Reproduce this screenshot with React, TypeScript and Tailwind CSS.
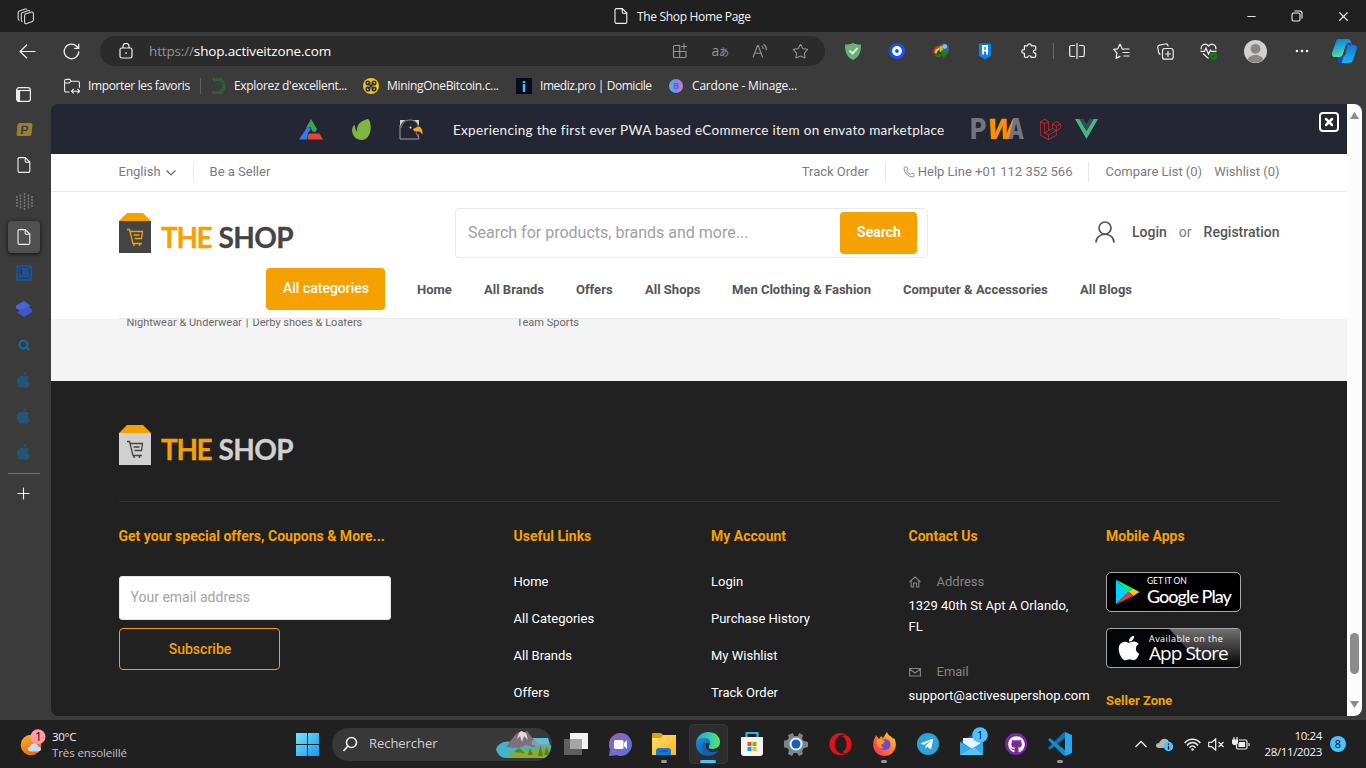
import React from 'react';
import { Star, ChevronDown, Phone, Plus, X, Minus, Search } from 'lucide-react';
import { FaApple, FaGithub, FaLaravel, FaOpera, FaTelegramPlane } from 'react-icons/fa';

const DocIcon = ({ className = '' }: { className?: string }) => (
  <svg width="14" height="16" viewBox="0 0 14 16" fill="none" stroke="#f2f2f2" strokeWidth="1.1" className={className}>
    <path d="M2.5.6h5.8L12.8 5v8.9c0 .9-.6 1.5-1.5 1.5H2.5c-.9 0-1.5-.6-1.5-1.5V2.1C1 1.2 1.6.6 2.5.6ZM8.2.8v3.1c0 .8.5 1.3 1.3 1.3h3.1" />
  </svg>
);

const Cell = ({ children, className = 'w-11' }: { children: React.ReactNode; className?: string }) => (
  <div className={`flex shrink-0 items-center justify-center ${className}`}>{children}</div>
);

function TitleBar() {
  return (
    <div className="flex h-8 items-center bg-[#202020] text-[#f5f5f5]">
      <Cell className="ml-1 w-11">
        <svg width="18" height="17" viewBox="0 0 18 17" fill="none" stroke="#d6d6d6" strokeWidth="1.1" strokeLinejoin="round">
          <path d="M7.5 6.3 14 4.2c1.5-.4 2.4.1 2.4 1.5v6.1c0 .8-.4 1.3-1.1 1.6l-5.4 2.2c-1.4.5-2.3 0-2.3-1.4V7.9c0-.8.4-1.3 1-1.5" />
          <path d="M5.5 13.7c-.8-.1-1.2-.6-1.2-1.4V6.2c0-.8.4-1.3 1.2-1.6L11 2.7c1-.3 1.7-.2 2.1.5M2.5 12.3c-.9-.1-1.3-.6-1.3-1.5V4.6c0-.8.4-1.3 1.2-1.6L8 1.1c1-.3 1.7-.2 2.1.5" />
        </svg>
      </Cell>
      <div className="ml-[566px] flex items-center">
        <DocIcon />
        <span className="ml-[9px] w-[118px] whitespace-nowrap pt-px font-['Open_Sans'] text-[12px] tracking-[-0.33px]">The Shop Home Page</span>
      </div>
      <div className="ml-auto flex">
        <Cell className="w-[46px]"><Minus size={13} strokeWidth={1.7} /></Cell>
        <Cell className="w-[46px]">
          <svg width="12" height="12" viewBox="0 0 12 12" fill="none" stroke="#eee" strokeWidth="1.1"><rect x="1" y="3" width="8" height="8" rx="1.5" /><path d="M3.5 1h5C10 1 11 2 11 3.5v5" /></svg>
        </Cell>
        <Cell className="w-[46px]"><X size={15} strokeWidth={1.9} /></Cell>
      </div>
    </div>
  );
}

function AddressBar() {
  return (
    <div className="ml-1.5 flex h-[30px] w-[725px] items-center rounded-full bg-[#2b2b2b]">
      <svg className="ml-[19px]" width="14" height="16" viewBox="0 0 14 16" fill="none" stroke="#eee" strokeWidth="1.2">
        <rect x="1" y="5" width="12" height="10" rx="1.8" /><path d="M4 5V3.3a3 3 0 0 1 6 0V5" /><rect x="6.3" y="9.3" width="1.5" height="1.5" fill="#eee" stroke="none" />
      </svg>
      <span className="ml-4 whitespace-nowrap font-['Open_Sans'] text-[13.5px] tracking-[-0.15px] text-white"><span className="text-[#949494]">https://</span>shop.activeitzone.com</span>
      <div className="ml-auto mr-[5px] flex text-[#959595]">
        <Cell className="w-10">
          <svg width="16" height="16" viewBox="0 0 16 16" fill="none" stroke="#959595" strokeWidth="1.1"><path d="M8 2.500H2.500c-.6 0-1 .4-1 1v10c0 .6.400 1 1 1h10.500c.6 0 1-.4 1-1V8.500H1.500M7.700 2.500v12M12 .5v6M9 3.500h6" /></svg>
        </Cell>
        <Cell className="w-10"><span className="whitespace-nowrap font-['Open_Sans'] text-[14px] leading-4 tracking-[-0.5px]">a<span className="font-['Noto_Sans_CJK_JP'] text-[10px]">あ</span></span></Cell>
        <Cell className="w-10">
          <svg width="16" height="16" viewBox="0 0 16 16" fill="none" stroke="#959595" strokeWidth="1.1"><path d="m1 14.5 4.5-12h.7l4.5 12M2.700 10.300h6.400M9.800 3c1 .8 1.400 1.800 1.400 3M11.500 1.300c2.200 1.300 3 3.300 2.800 6" /></svg>
        </Cell>
        <Cell className="w-10"><Star size={17} strokeWidth={1.5} /></Cell>
      </div>
    </div>
  );
}

function Toolbar() {
  return (
    <div className="flex h-[38px] items-center bg-[#3b3b3b]">
      <Cell className="ml-[5px] w-11">
        <svg width="17" height="15" viewBox="0 0 17 15" fill="none" stroke="#eee" strokeWidth="1.2"><path d="M16.500 7.500H1M8 .7 1 7.500l7 6.800" /></svg>
      </Cell>
      <Cell className="w-[45px]">
        <svg width="17" height="17" viewBox="0 0 17 17" fill="none" stroke="#eee" strokeWidth="1.3"><path d="M15.800 8.500a7.300 7.300 0 1 1-2.100-5.200L15.500 5M15.700.8v4.500h-4.500" /></svg>
      </Cell>
      <AddressBar />
      <div className="ml-1.5 flex items-center">
        <Cell>
          <svg width="16" height="17" viewBox="0 0 16 17"><path d="M8 0c2.500 1 5 1.500 8 1.600C16 9 14.500 14 8 17 1.500 14 0 9 0 1.600 3 1.500 5.500 1 8 0Z" fill="#67b279" /><path d="m4.500 7.500 3 3 5-5.500" stroke="#fff" strokeWidth="1.600" fill="none" /></svg>
        </Cell>
        <Cell><svg width="16" height="16" viewBox="0 0 16 16"><circle cx="8" cy="8" r="8" fill="#1652f0" /><circle cx="8" cy="8" r="3.400" stroke="#fff" strokeWidth="3" fill="none" /></svg></Cell>
        <Cell>
          <svg width="17" height="16" viewBox="0 0 17 16" fill="none">
            <path d="M7.500 3.500C3 4 1.200 6.500 1.200 10" stroke="#e5392b" strokeWidth="1.800" /><path d="M7.500 5.500C4 6 2.800 8 2.800 10.500" stroke="#f4d21f" strokeWidth="1.800" />
            <circle cx="11" cy="5.500" r="5" fill="#3b62a8" /><circle cx="11.800" cy="3.500" r="2.300" fill="#9cbadf" /><path d="M6 5c2-3 4-3 4 0S8 9 7 9Z" fill="#b5c32c" />
            <path d="M1 10c1 4.500 5 5.500 9 2.500V15.500L16.500 9 8 7.500l1 2.500c-2 2-5 2-8 0Z" fill="#1f7a10" />
          </svg>
        </Cell>
        <Cell>
          <svg width="12" height="17" viewBox="0 0 12 17"><path d="M0 .5h12v12.300L6 16.500 0 12.800Z" fill="#0d83e8" /><path d="M3 2h6v9.500H7.200V8.500H4.800v3H3Z" fill="#fff" /><path d="M4.900 4h.8v3h-.8ZM6.300 4h.8v3h-.8Z" fill="#0d83e8" /></svg>
        </Cell>
        <Cell>
          <svg width="16" height="16" viewBox="0 0 16 16" fill="none" stroke="#eee" strokeWidth="1.200" strokeLinejoin="round"><path d="M3.500 2.800h3c0-2.600 3.800-2.600 3.800 0h3.200c.7 0 1.200.5 1.200 1.200v3c-3.100-.4-3.100 3.600 0 3.200v3c0 .7-.5 1.200-1.200 1.200h-3.200c-.2-2.200-3.400-2.200-3.700 0h-2c-.7 0-1.200-.5-1.200-1.200v-2.900c-3.500 0-3.500-3.700 0-3.700Z" /></svg>
        </Cell>
      </div>
      <div className="ml-0.5 h-4 w-px bg-[#686868]" />
      <div className="ml-px flex items-center">
        <Cell>
          <svg width="16" height="16" viewBox="0 0 16 16" fill="none" stroke="#eee" strokeWidth="1.200"><path d="M6 2.500H2.300c-.9 0-1.600.7-1.600 1.600v7.800c0 .9.7 1.600 1.600 1.600H6M10 2.500h3.700c.9 0 1.600.7 1.600 1.600v7.800c0 .9-.7 1.600-1.600 1.600H10M8 0v16" /></svg>
        </Cell>
        <Cell>
          <svg width="17" height="17" viewBox="0 0 17 17" fill="none" stroke="#eee" strokeWidth="1.200" strokeLinejoin="round"><path d="m10.800 6.300-1.500-.2L7 1 4.800 5.800.7 6.300l3.200 3.600-.8 5.500 4.200-2.300M10.500 6h6M9.500 9.500h7M10.500 13h6" /></svg>
        </Cell>
        <Cell>
          <svg width="17" height="17" viewBox="0 0 17 17" fill="none" stroke="#eee" strokeWidth="1.200"><rect x="5.500" y="5.500" width="10.700" height="10.700" rx="2.300" /><path d="M11 8v6M8 11h6M3.500 11.500C2.300 11.300 2 10.700 1.700 9.500L.8 5C.5 3.600 1 2.600 2.400 2.200L8 1c1.600-.4 2.600.1 3 1.600l.2.800" /></svg>
        </Cell>
        <Cell>
          <svg width="18" height="17" viewBox="0 0 18 17" fill="none" stroke="#eee" strokeWidth="1.200"><path d="M1.300 6.300C.3 2.500 5-1 8.500 3c3.600-4 8.300-.5 7.200 3.300M.5 8.300h4L6 5l2.500 6 2-4 1 1.300h5M3 10.500l5.500 5" /><circle cx="13.500" cy="13" r="3.700" fill="#107c10" stroke="none" /><path d="m12 13 1 1 2-2.200" stroke="#0b4a0b" strokeWidth="1" /></svg>
        </Cell>
        <Cell className="w-12">
          <svg width="23" height="23" viewBox="0 0 23 23"><circle cx="11.500" cy="11.500" r="11.500" fill="#d2d0ce" /><circle cx="11.500" cy="8.800" r="4.900" fill="#8a8886" /><path d="M3.700 19.500c2-6 13.600-6 15.600 0-4.500 4.300-11 4.300-15.600 0Z" fill="#8b8987" /></svg>
        </Cell>
        <Cell className="w-[45px]"><svg width="14" height="4" fill="#f2f2f2"><circle cx="2" cy="2" r="1.300" /><circle cx="7" cy="2" r="1.300" /><circle cx="12" cy="2" r="1.300" /></svg></Cell>
        <Cell className="w-10">
          <svg width="25" height="24" viewBox="0 0 25 24">
            <defs><linearGradient id="cpa" x2=".3" y2="1"><stop stopColor="#0877c9" /><stop offset=".5" stopColor="#20acd8" /><stop offset="1" stopColor="#57dc9d" /></linearGradient><linearGradient id="cpb" x2="0" y2="1"><stop stopColor="#1d70d6" /><stop offset="1" stopColor="#16b6f5" /></linearGradient></defs>
            <path d="M6 0h10c2 0 2.500 1.500 3 3l1 3h-6l-3 9c-.6 2-1.700 3-3.500 3H3c-3 0-3.500-2-2.700-4.500L4 2.500C4.500 1 5 0 6 0Z" fill="url(#cpa)" />
            <path d="M16 6h6c2.500 0 3.300 2 2.600 4.500L21 21c-.6 2-1.700 3-3.500 3H9c-2 0-3-2-3-5.500h3.500c1.300 0 2-.7 2.500-2l2.300-8c.4-1.600.7-2.500 1.700-2.500Z" fill="url(#cpb)" />
            <path d="M14 6h6l-1-2.500h-4Z" fill="#1a50b8" /><path d="m11 16 3-9.500 1.500-.5-2.500 10.500Z" fill="#3b3b3b" />
            <path d="M6 18.500h3.500c1.300 0 2-.7 2.500-2L9.500 24C7 24 6 21.500 6 18.500Z" fill="#1745c9" />
          </svg>
        </Cell>
      </div>
    </div>
  );
}

function Bookmarks() {
  const text = "whitespace-nowrap font-['Open_Sans'] text-[12px] text-[#f4f4f4]";
  return (
    <div className="flex h-[34px] items-center pb-0.5 pl-[13px]">
      <svg width="16" height="16" viewBox="0 0 16 16" fill="none" stroke="#eee" strokeWidth="1.100"><path d="M5.500 14H2.200C1.200 14 .6 13.400.6 12.400V3C.6 2 1.200 1.400 2.200 1.400h3.500l1.500 1.800h6.600c1 0 1.600.6 1.600 1.600v5M.6 5h4.600l2-1.800M8 13.200h7.500M9.700 11l-2.200 2.200 2.200 2.200M13.500 11l2.200 2.200-2.200 2.200" /></svg>
      <span className={`${text} ml-2 w-[112px] tracking-[-0.37px]`}>Importer les favoris</span>
      <div className="h-4 w-px bg-[#606060]" />
      <svg className="ml-[9px]" width="16" height="16" viewBox="0 0 16 16" fill="none"><path d="M3 2.500C8-.5 14 2.500 14 8s-6 9-12 5.500" stroke="#2b6439" strokeWidth="3.500" strokeDasharray="2.500 .5" /></svg>
      <span className={`${text} ml-2 w-[129px] tracking-[-0.32px]`}>Explorez d'excellent...</span>
      <svg width="16" height="16" viewBox="0 0 16 16"><circle cx="8" cy="8" r="8" fill="#f2c414" /><g fill="none" stroke="#28304f" strokeWidth="1.500"><circle cx="5" cy="5" r="1.800" /><circle cx="11" cy="5" r="1.800" /><circle cx="5" cy="11" r="1.800" /><circle cx="11" cy="11" r="1.800" /><path d="m5 5 6 6M11 5l-6 6" /></g></svg>
      <span className={`${text} ml-2 w-[129px] tracking-[-0.32px]`}>MiningOneBitcoin.c...</span>
      <div className="flex size-4 items-center justify-center bg-[#050b1b] font-['Open_Sans'] text-[15px] font-bold leading-4 text-[#50c4e8]">i</div>
      <span className={`${text} ml-2 w-[129px] tracking-[-0.46px]`}>Imediz.pro | Domicile</span>
      <div className="flex size-3.5 items-center justify-center rounded-full bg-linear-to-r from-[#37bde8] via-[#7a86eb] to-[#dc6fd1] text-[9px] font-bold text-[#5966c5]">B</div>
      <span className={`${text} ml-[9px] tracking-[-0.18px]`}>Cardone - Minage...</span>
    </div>
  );
}

const dotColumns = [
  { x: 1, ys: [4, 7, 10, 13] },
  { x: 4.5, ys: [2.5, 5.5, 8.5, 11.5, 14.5] },
  { x: 8.5, ys: [1, 4, 7, 10, 13, 16] },
  { x: 12.5, ys: [2.5, 5.5, 8.5, 11.5, 14.5] },
  { x: 16, ys: [4, 7, 10, 13] },
];

function Sidebar() {
  return (
    <aside className="flex w-[51px] shrink-0 flex-col items-start pt-[7px]">
      <Cell className="ml-[7px] h-[34px] w-8"><svg width="15" height="15" viewBox="0 0 15 15" fill="none" stroke="#eee" strokeWidth="1.200"><rect x=".6" y=".6" width="13.800" height="13.800" rx="2.500" /><path d="M1 3.500h13" /><path d="M1 3.500h2.500v10.800H2Z" fill="#eee" /></svg></Cell>
      <Cell className="ml-2 h-9 w-8"><div className="flex h-[13px] w-[15px] -skew-x-6 items-center justify-center rounded-[2px] bg-[#99812c] font-['Liberation_Sans'] text-[12px] font-bold leading-none text-[#39394a]">P</div></Cell>
      <Cell className="ml-2 h-9 w-8"><DocIcon /></Cell>
      <Cell className="ml-2 h-9 w-8">
        <svg width="17" height="17" viewBox="0 0 17 17" fill="#808080">{dotColumns.map(({ x, ys }) => ys.map((y) => <circle key={`${x}-${y}`} cx={x} cy={y} r=".9" />))}</svg>
      </Cell>
      <Cell className="ml-2 my-0.5 h-8 w-8 rounded bg-[#505050] shadow-[0_1px_4px_#111]"><DocIcon /></Cell>
      <Cell className="ml-2 h-9 w-8"><svg width="16" height="16" viewBox="0 0 16 16"><rect width="16" height="16" rx="1" fill="#234e88" /><rect x="2.500" y="2.500" width="11" height="11" rx="2" fill="none" stroke="#1c3e70" /><path d="M5 4v5.500" stroke="#263449" strokeWidth="1.500" /></svg></Cell>
      <Cell className="ml-2 h-9 w-8"><svg width="16" height="16" viewBox="0 0 16 16"><path d="M8 0l6.500 4.500L10 7.500 3.500 9.500 0 7V4.500Z" fill="#4b61df" /><path d="M8 16 1 11.500 6 8.500l6.500-3L16 9v2Z" fill="#4057cb" /></svg></Cell>
      <Cell className="ml-2 h-9 w-8"><Search size={12} strokeWidth={4} className="text-[#1769ad]" /></Cell>
      {[0, 1, 2].map((n) => (
        <Cell key={n} className="ml-2 h-9 w-8 pb-0.5 pr-px"><svg width="13" height="16" viewBox="0 0 13 16" fill="#255479"><path d="M6.500 4.500c1.500-.9 4.300-1 5.800.9-2.300 1.700-2 4.800.7 6-.9 2.300-2.200 4.300-3.600 4.300-1 0-1.700-.5-2.900-.5s-2 .5-3 .5C1.500 15.700 0 12 0 9c0-4.500 3.700-5.700 6.500-4.500Z" /><path d="M6.300 3.500C6.200 1.800 7.500.3 9 0c.2 1.700-1 3.300-2.700 3.500Z" /></svg></Cell>
      ))}
      <div className="ml-2 mt-[2px] h-px w-8 bg-[#707070]" />
      <Cell className="ml-[7px] mt-px h-9 w-8"><Plus size={19} strokeWidth={1.400} className="text-[#f0f0f0]" /></Cell>
    </aside>
  );
}

function Logo({ body, cart, text }: { body: string; cart: string; text: string }) {
  return (
    <div className="flex h-10">
      <svg width="32" height="40" viewBox="0 0 32 40" className={body}>
        <path d="M8 0h16l8 8H0Z" fill="#f5a100" /><path d="M0 8h32v32H0Z" fill="currentColor" />
        <g className={cart} fill="none" stroke="currentColor" strokeWidth="1.300"><path d="M8 16.500h2.500l3.500 14h9M11.500 18.500h12l-1 7h-7M14.500 22h6" /></g>
        <g className={cart} fill="currentColor"><circle cx="15" cy="32" r="1" /><circle cx="20.500" cy="32" r="1" /></g>
      </svg>
      <div className={`ml-2.5 mt-[5px] whitespace-nowrap font-['Lato'] text-[28px] font-bold leading-[38px] [-webkit-text-stroke:0.3px_currentColor] ${text}`}><span className="inline-block w-[57.5px] tracking-[-1.4px] text-[#f5a100]">THE</span><span className="tracking-[-0.6px]">SHOP</span></div>
    </div>
  );
}

function Banner() {
  return (
    <div className="relative flex h-[50px] items-center bg-[#242733]">
      <svg className="ml-[248px]" width="24" height="21" viewBox="0 0 24 21"><path d="M12 0 18 10l-1.500 3-3-.5L11.500 8 7 9Z" fill="#34a853" /><path d="M8 8.500h2.500L12 10l-3 4-1 6.500H0Z" fill="#3478f6" /><path d="M9 16l1.500-1.500h10l3.500 6H9Z" fill="#ea4335" /></svg>
      <svg className="ml-[29px]" width="19" height="21" viewBox="0 0 19 21"><path d="M15 .2c2-.7 3.500 3 3.700 7.500C19 16 14.500 21 9.500 21 3.500 21-.2 15.500.1 11 .3 8 1.500 6.500 2.500 6c1 3 1 5 2.500 7C4.500 6 8 2 15 .2Z" fill="#82b440" /></svg>
      <svg className="ml-7" width="24" height="21" viewBox="0 0 24 21" fill="none"><path d="M1 6v14h19l-1-5" stroke="#9b9ca2" /><path d="M1 7V1h6C4 2 3 4 1 7ZM20 7V1h-8c4 0 6 2 8 6Z" fill="#d0d0d0" /><path d="M2 9c1-5 4-8 9-8s8 3 8 7l-2 6c1 2 2 3 2 4" stroke="#aaa" strokeWidth=".700" /><circle cx="11.500" cy="8.500" r="1" fill="#ddd" /><path d="m14 10 5-2.500c3 0 5 3 4.500 8-2-3-4-4-8-3Z" fill="#f5a623" /></svg>
      <span className="ml-[30px] w-[492px] whitespace-nowrap pt-0.5 font-['Lato'] text-[13.5px] tracking-[0.3px] text-[#f0f0f1]">Experiencing the first ever PWA based eCommerce item on envato marketplace</span>
      <div className="ml-[25px] flex w-14 font-['Inter'] text-[28px] font-extrabold leading-none tracking-[-2px] text-[#737681]"><span className="w-[14px] origin-left scale-x-90">P</span><span className="w-[24px] origin-bottom-left -skew-x-12 text-[#ff8e00]">W</span><span className="origin-left scale-x-75">A</span></div>
      <FaLaravel className="ml-3.5 text-[#d92c27]" size={21} />
      <svg className="ml-[14px]" width="23" height="20" viewBox="0 0 23 20"><path d="M0 0h4.500l7 12 7-12H23L11.500 20Z" fill="#41b883" /><path d="M4.500 0h4l3 5 3-5h4l-7 12Z" fill="#35495e" /></svg>
      <button className="absolute right-2 top-2 flex size-5 items-center justify-center rounded border-2 border-white text-white"><X size={12} strokeWidth={5} /></button>
    </div>
  );
}

const navItems = [
  { label: 'Home', width: 'w-[67px]' },
  { label: 'All Brands', width: 'w-[92px]' },
  { label: 'Offers', width: 'w-[69px]' },
  { label: 'All Shops', width: 'w-[87px]' },
  { label: 'Men Clothing & Fashion', width: 'w-[171px]' },
  { label: 'Computer & Accessories', width: 'w-[177px]' },
  { label: 'All Blogs', width: 'w-[60px]' },
];

function Header() {
  return (
    <header className="bg-white">
      <div className="flex h-[38px] items-center whitespace-nowrap border-b border-[#ebebeb] pb-0.5 pl-[67.5px] pr-[67.5px] text-[13px] text-[#7b7b7b]">
        <span>English</span>
        <svg width="10" height="6" viewBox="0 0 10 6" fill="none" stroke="#665c75" strokeWidth="1.200" className="ml-[5px] mt-0.5"><path d="m.5.5 4.500 4.500L9.500.5" /></svg>
        <div className="ml-[17px] mr-4 h-5 w-px bg-[#e8e8e8]" /><span>Be a Seller</span>
        <span className="ml-auto">Track Order</span><div className="ml-4 mr-[17px] h-5 w-px bg-[#e8e8e8]" />
        <Phone size={12} strokeWidth={1.600} className="mr-[3px]" /><span>Help Line +01 112 352 566</span>
        <div className="mx-4 h-5 w-px bg-[#e8e8e8]" /><span>Compare List (0)</span><span className="ml-3">Wishlist (0)</span>
      </div>
      <div className="flex h-[76px] items-start pl-[68px] pr-[67.5px]">
        <div className="w-[336px] pt-[21px]"><Logo body="text-[#444]" cart="text-[#f5a100]" text="text-[#444]" /></div>
        <div className="mt-4 flex h-[50px] w-[473px] items-center justify-between rounded border border-[#eaeaea] pl-3 pr-2.5">
          <span className="text-[16px] text-[#a0a0a0]">Search for products, brands and more...</span>
          <button className="h-[42px] w-[77px] rounded bg-[#f5a100] pb-0.5 pl-px text-[14px] font-bold text-white">Search</button>
        </div>
        <div className="ml-auto mt-[29px] flex items-center whitespace-nowrap text-[14px] text-[#7b7b7b]">
          <svg width="20" height="22" viewBox="0 0 20 22" fill="none" stroke="#555" strokeWidth="1.700"><circle cx="10" cy="7" r="6" /><path d="M1 21.500c0-11 18-11 18 0" /></svg>
          <span className="ml-[17px] font-medium text-[#555]">Login</span><span className="mx-3">or</span><span className="font-medium text-[#555]">Registration</span>
        </div>
      </div>
      <div className="ml-[68px] mr-[67px] flex h-[51px] items-start border-b border-[#e7e7e7] pl-[147px] text-[13px] font-bold text-[#555]">
        <button className="mr-8 h-[42px] w-[119px] rounded bg-[#f5a100] pb-0.5 pl-px text-[14px] font-medium text-white">All categories</button>
        {navItems.map((item) => <span key={item.label} className={`${item.width} shrink-0 whitespace-nowrap leading-[43px]`}>{item.label}</span>)}
      </div>
    </header>
  );
}

function StoreBadge({ apple = false }: { apple?: boolean }) {
  return apple ? (
    <div className="relative flex h-10 w-[135px] items-center overflow-hidden rounded-[4px] border border-[#a6a6a6] bg-[#030506] text-white">
      <div className="absolute inset-0 bg-linear-to-b from-[#707070] via-[#3a3a3a] to-[#050505] [clip-path:polygon(47%_0,100%_0,100%_100%,72%_100%)]" />
      <FaApple size={28} className="relative ml-2 shrink-0" />
      <div className="relative ml-1.5 font-['Open_Sans']"><div className="whitespace-nowrap text-[9px] leading-[11px] tracking-[0.45px]">Available on the</div><div className="whitespace-nowrap text-[19px] font-medium leading-[19px] tracking-[-0.95px]">App Store</div></div>
    </div>
  ) : (
    <div className="flex h-10 w-[135px] items-center rounded-[5px] border border-[#a6a6a6] bg-black text-white">
      <svg className="ml-[9px]" width="24" height="26" viewBox="0 0 24 26"><path d="M0 1v24l12.500-12Z" fill="#00d2ff" /><path d="M0 .5 17 9.500 12.500 14Z" fill="#00f076" /><path d="m17 9.500 6.500 3.500-6.500 4-4-4Z" fill="#ffc900" /><path d="M0 25.500 12.500 13l4.500 4Z" fill="#f63448" /></svg>
      <div className="ml-[7px]"><div className="whitespace-nowrap font-['Lato'] text-[8.5px] leading-[9px] tracking-[-0.12px]">GET IT ON</div><div className="whitespace-nowrap font-['Lato'] text-[18px] font-medium leading-[21px] tracking-[-0.95px]">Google Play</div></div>
    </div>
  );
}

const LinkColumn = ({ title, links }: { title: string; links: string[] }) => (
  <div className="w-[197.5px] shrink-0">
    <h4 className="text-[14px] font-bold leading-4 text-[#f5a100]">{title}</h4>
    <div className="mt-[19px] text-[13px] leading-[37px] text-white">{links.map((link) => <div key={link}>{link}</div>)}</div>
  </div>
);

function Footer() {
  return (
    <footer className="h-[335px] overflow-hidden bg-[#212121] pl-[68px] pr-[67px] pt-11">
      <Logo body="text-[#d0d0d0]" cart="text-[#444]" text="text-[#d0d0d0]" />
      <div className="mt-9 h-px bg-[#2d313a]" />
      <div className="-ml-[0.5px] flex pt-[26px]">
        <div className="w-[395px] shrink-0">
          <h4 className="text-[14px] font-bold leading-4 text-[#f5a100]">Get your special offers, Coupons &amp; More...</h4>
          <div className="ml-[0.5px] mt-8 flex h-11 w-[272px] items-center rounded-[3px] border border-[#e8e8e8] bg-white pb-px pl-[10.5px] text-[14px] text-[#a3a3a3]">Your email address</div>
          <button className="ml-[0.5px] mt-2 h-[42px] w-[161px] rounded border border-[#f5a100] pl-px text-[14px] font-medium text-[#f5a100]">Subscribe</button>
        </div>
        <LinkColumn title="Useful Links" links={['Home', 'All Categories', 'All Brands', 'Offers']} />
        <LinkColumn title="My Account" links={['Login', 'Purchase History', 'My Wishlist', 'Track Order']} />
        <div className="w-[197.500px] shrink-0 text-[13px] text-white">
          <h4 className="text-[14px] font-bold leading-4 text-[#f5a100]">Contact Us</h4>
          <div className="mt-7 flex h-5 items-center text-[#858585]"><svg width="12" height="12" viewBox="0 0 12 12" fill="none" stroke="#858585" strokeWidth="1.100"><path d="m.5 6 5.500-5L11.500 6M2.200 5v6h2.300V7h3v4h2.300V5" /></svg><span className="ml-4">Address</span></div>
          <p className="mt-[3px] w-[175px] leading-[21px]">1329 40th St Apt A Orlando, FL</p>
          <div className="mt-[25px] flex h-5 items-center text-[#858585]"><svg width="12" height="12" viewBox="0 0 12 12" fill="none" stroke="#858585" strokeWidth="1.100"><path d="M.6 2.500h10.800v7.500H.6Zm0 .5L6 7l5.400-4" /></svg><span className="ml-4">Email</span></div>
          <p className="mt-[4px] whitespace-nowrap leading-5">support@activesupershop.com</p>
        </div>
        <div className="shrink-0">
          <h4 className="text-[14px] font-bold leading-4 text-[#f5a100]">Mobile Apps</h4>
          <div className="mt-7"><StoreBadge /></div><div className="mt-4"><StoreBadge apple /></div>
          <h4 className="mt-[25px] text-[13px] font-bold leading-4 text-[#f5a100]">Seller Zone</h4>
        </div>
      </div>
    </footer>
  );
}

function Page() {
  return (
    <div className="flex h-[612px] w-[1311px] overflow-hidden rounded-lg bg-[#212121] font-['Roboto']">
      <div className="w-[1296px] shrink-0 overflow-hidden">
        <Banner />
        <Header />
        <div className="h-[62px] overflow-hidden bg-[#f4f4f4] pl-[75.500px]">
          <div className="-mt-1 flex whitespace-nowrap text-[11px] leading-4 text-[#696969]"><span className="w-[390px]">Nightwear &amp; Underwear<span className="mx-[4px]">|</span>Derby shoes &amp; Loafers</span><span>Team Sports</span></div>
        </div>
        <Footer />
      </div>
      <div className="flex w-[15px] shrink-0 flex-col items-center bg-[#fcfcfc] pt-2">
        <svg width="9" height="7" fill="#8b8b8b"><path d="M4.500 0 9 7H0Z" /></svg>
        <div className="mt-[514px] h-[41px] w-[9px] rounded-full bg-[#8c8c8c]" />
        <svg className="mt-[27px]" width="9" height="7" fill="#8b8b8b"><path d="M4.500 7 9 0H0Z" /></svg>
      </div>
    </div>
  );
}

const Dot = () => <div className="absolute bottom-[5px] h-[3px] w-1.5 rounded-full bg-[#999]" />;

function TaskCell({ children, active = false, dot = false }: { children: React.ReactNode; active?: boolean; dot?: boolean }) {
  return (
    <div className="relative flex h-12 w-11 shrink-0 items-center justify-center">
      {active && <div className="absolute left-[3px] top-1 h-10 w-[39px] rounded border border-[#363636] bg-[#2d2d2d]" />}
      <div className="relative">{children}</div>
      {dot && <Dot />}
      {active && <div className="absolute bottom-[5px] h-[3px] w-4 rounded-full bg-[#4cc2ff]" />}
    </div>
  );
}

function Taskbar() {
  return (
    <div className="flex h-12 items-center bg-[#202020] font-['Open_Sans'] text-[#f5f5f5]">
      <svg className="ml-5" width="27" height="30" viewBox="0 0 27 30"><defs><linearGradient id="sun" x2=".5" y2="1"><stop stopColor="#f7b52c" /><stop offset="1" stopColor="#e9690c" /></linearGradient></defs><circle cx="11" cy="16" r="10.300" fill="url(#sun)" /><path d="M11 22.500c-4 0-4-4-1-5 1-4 7-4 8 0 4 0 4 5 0 5Z" fill="#c5dcff" /><circle cx="18" cy="7.700" r="7.500" fill="#ff99a4" /><text x="15" y="12" fontSize="12" fill="#111">1</text></svg>
      <div className="ml-[5px] w-[244px] whitespace-nowrap pt-px text-[11.5px] leading-4"><div className="tracking-[-0.3px]">30°C</div><div className="tracking-[-0.1px] text-[#c4c4c4]">Très ensoleillé</div></div>
      <svg width="23" height="23" viewBox="0 0 23 23"><defs><linearGradient id="win" x2="1" y2="1"><stop stopColor="#75e5fb" /><stop offset="1" stopColor="#1598f4" /></linearGradient></defs><path d="M0 0h11v11H0ZM12 0h11v11H12ZM0 12h11v11H0ZM12 12h11v11H12Z" fill="url(#win)" /></svg>
      <div className="ml-[13px] flex h-[33px] w-[220px] items-center overflow-hidden rounded-full bg-[#383838]">
        <svg className="ml-[11px]" width="15" height="16" viewBox="0 0 15 16" fill="none" stroke="#eee" strokeWidth="1.600"><circle cx="8.500" cy="6.500" r="5" /><path d="m5 10-4.500 5" /></svg>
        <span className="ml-[11px] text-[13px] tracking-[-0.05px] text-[#d0d0d0]">Rechercher</span>
        <svg className="ml-auto mr-px" width="55" height="28" viewBox="0 0 55 28"><path d="M36 8h16l3 10H30Z" fill="#4ec5da" /><path d="M0 19c2-5 8-9 16-7l19 1 20 2c0 7-3 12-7 13H10c-5 0-9-4-10-9Z" fill="#3fb5c9" /><path d="m10 17 9-12 4-3 4 1 4-2 3 4 8 10-5 2-7-2-7 3Z" fill="#806e79" /><path d="m23 3 2-2 5 2 2 7-4-4-2 6-2-6-3 3Z" fill="#e2d9dd" /><path d="m36 10 8 4h10l-5 3-13-2Z" fill="#a59298" /><path d="M12 27c4-7 12-9 22-8l20-1c0 5-2 8-6 10H14Z" fill="#8aaa35" /><path d="m18 22 5-4 6 5ZM32 25l2-7 3 7ZM42 26l2.500-11 2.500 11ZM48 25l2.500-9 3 9Z" fill="#4b861e" /></svg>
      </div>
      <div className="ml-[2px] flex">
        <TaskCell><svg width="24" height="23"><path d="M6 0h18v16H6Z" fill="#f2f2f2" /><path d="M0 6h18v16H0Z" fill="#666" fillOpacity=".9" /><path d="M6 6h12v10H6Z" fill="#a5a5a5" /></svg></TaskCell>
        <TaskCell><svg width="23" height="23"><defs><linearGradient id="chat" x2="1" y2="1"><stop stopColor="#9763b9" /><stop offset="1" stopColor="#5870e2" /></linearGradient></defs><path d="M11.500 0a11.500 11.500 0 1 1-4 22.300L0 23l1-6.500A11.500 11.500 0 0 1 11.500 0Z" fill="url(#chat)" /><rect x="5" y="7" width="9.500" height="9" rx="1.500" fill="#fff" /><path d="m15 10 3-3v9l-3-3Z" fill="#fff" /></svg></TaskCell>
        <TaskCell dot><svg width="24" height="22"><defs><linearGradient id="fold" x2="1" y2="1"><stop stopColor="#ffdc70" /><stop offset="1" stopColor="#fcb918" /></linearGradient></defs><path d="M0 1c0-1 1-1 1-1h8l2 2h13v4H0Z" fill="#daa014" /><path d="M0 5h9l2-3h13v20H0Z" fill="url(#fold)" /><path d="M4 22v-4c0-2 1-3 3-3h9c2 0 3 1 3 3v4Z" fill="#1679cd" /><path d="M7 18h9" stroke="#0b5699" /></svg></TaskCell>
        <TaskCell active><svg width="24" height="24" viewBox="0 0 24 24"><defs><linearGradient id="ed1"><stop stopColor="#2aa5e4" /><stop offset=".6" stopColor="#36cbae" /><stop offset="1" stopColor="#67e257" /></linearGradient><linearGradient id="ed2" x2="1" y2="1"><stop stopColor="#1692d8" /><stop offset="1" stopColor="#0c4696" /></linearGradient></defs><path d="M0 11C1 4 6 0 12 0c7 0 12 4 12 10 0 5-4 7-8 7-3 0-4-1-3-3 2-3 0-7-6-7-3 0-6 2-7 4Z" fill="url(#ed1)" /><path d="M0 12c0-4 4-6 8-6 5 0 7 3 6 6-2-2-6-1-6 3 0 5 7 8 14 4-2 3-5 5-10 5C5 24 0 19 0 12Z" fill="url(#ed2)" /><path d="M8 10c-3 4-1 12 6 13 4-.3 7-2 8-4-7 3-13-1-12-6Z" fill="#1561ad" /></svg></TaskCell>
        <TaskCell><svg width="22" height="24"><path d="M5.500 7V1h11v6" fill="none" stroke="#31b5e6" strokeWidth="2.200" /><path d="M0 5h22v16c0 2-1 3-3 3H3c-2 0-3-1-3-3Z" fill="#f3f3f3" /><path d="M6.500 10h4v4h-4Z" fill="#f25022" /><path d="M11.500 10h4v4h-4Z" fill="#7fba00" /><path d="M6.500 15h4v4h-4Z" fill="#00a4ef" /><path d="M11.500 15h4v4h-4Z" fill="#ffb900" /></svg></TaskCell>
        <TaskCell><svg width="24" height="24" viewBox="0 0 24 24"><path d="m9 1 1 3h4l1-3 4 2-1 4 2 2 4 1v5l-4 1-2 3 1 3-4 2-2-3h-3l-2 3-4-2 1-4-2-2-4-1V9l4-1 2-2-1-3Z" fill="#7a8590" /><circle cx="12" cy="12" r="6.500" fill="#e8edf2" /><circle cx="12" cy="12" r="4.500" fill="#1762ac" /></svg></TaskCell>
        <TaskCell><FaOpera size={23} className="text-[#e3101d]" /></TaskCell>
        <TaskCell dot><svg width="23" height="24" viewBox="0 0 23 24"><defs><linearGradient id="ff" x1="1" x2="0" y2="1"><stop stopColor="#fff044" /><stop offset=".4" stopColor="#ff8b25" /><stop offset="1" stopColor="#f42170" /></linearGradient></defs><path d="m3 3 3 4 2-3 2 2 4-6c1 4 5 4 6 7l1-1c5 9-1 18-9.500 18S-1 17 .5 9Z" fill="url(#ff)" /><circle cx="12" cy="12.500" r="5.500" fill="#7945cf" /><path d="M4 8c4-2 6 0 8 1l-2 3c-3 0-2 3 1 4-5 1-8-3-7-8Z" fill="#ff9a27" /></svg></TaskCell>
        <TaskCell><div className="flex size-[22px] items-center justify-center rounded-full bg-[#2da3dc] pr-0.5 text-white"><FaTelegramPlane size={14} /></div></TaskCell>
        <TaskCell><svg width="28" height="29" viewBox="0 0 28 29" className="-mt-1.5 ml-1"><path d="m0 15 12-7 11 7v12H0Z" fill="#1166b5" /><path d="M3 11h18v5l-9 6-9-6Z" fill="#e9f3fa" /><path d="m0 15 12 7 11-7v13H0Z" fill="#32abea" /><path d="m0 28 14-8 9 8Z" fill="#57c6f5" /><circle cx="20" cy="8" r="7.800" fill="#4cc2ff" /><text x="17" y="12" fontSize="11" fill="#111">1</text></svg></TaskCell>
        <TaskCell><div className="flex size-[22px] items-center justify-center rounded-full bg-[#792b9c] text-white"><FaGithub size={17} /></div></TaskCell>
        <TaskCell dot><svg width="24" height="24" viewBox="0 0 24 24"><path d="m17 0 7 3v18l-7 3Z" fill="#29a8f0" /><path d="m17 6-15 12-2-2L15 1l2-1Z" fill="#0873ba" /><path d="m17 18L2 6 0 8l15 15 2 1Z" fill="#108bd2" /></svg></TaskCell>
      </div>
      <div className="ml-auto flex items-center">
        <svg width="12" height="8" fill="none" stroke="#eee" strokeWidth="1.300"><path d="m.5 7 5.500-5.500L11.500 7" /></svg>
        <svg className="ml-[9px]" width="18" height="15" viewBox="0 0 18 15"><path d="M3 11c-4 0-4-5 0-5 2-5 8-6 10-1 2 0 3 2 3 4L8 11Z" fill="#b5b5b5" /><circle cx="12.500" cy="9.500" r="4.700" fill="#4cc2ff" /><path d="M12.500 9v3.500M12.500 6.500v1.200" stroke="#111" strokeWidth="1.200" /></svg>
        <svg className="ml-2.5" width="17" height="13" viewBox="0 0 17 13" fill="none" stroke="#eee" strokeWidth="1.400"><path d="M.7 5c4-5 11.600-5 15.600 0M3 7.500c3-4 8-4 11 0M5.500 9.700c2-2.500 4-2.500 6 0" /><circle cx="8.500" cy="11.500" r="1.200" fill="#eee" stroke="none" /></svg>
        <svg className="ml-[7px]" width="17" height="13" viewBox="0 0 17 13" fill="none" stroke="#eee" strokeWidth="1.200"><path d="M.7 4.300h3l4-3.500v11.400l-4-3.500h-3ZM10.500 4l5 5M15.500 4l-5 5" /></svg>
        <svg className="ml-[7px]" width="18" height="14" viewBox="0 0 18 14" fill="none" stroke="#eee" strokeWidth="1.200"><path d="M7 3h6.500c1 0 1.500.5 1.500 1.500v6c0 1-.5 1.500-1.500 1.500H6c-1 0-1.500-.5-1.500-1.500V8M17 6v3M2 0v3M5 0v3" /><path d="M.5 3h5v2c0 1.500-.8 2.500-2.500 2.500S.5 6.500.5 5ZM7.500 5.500h5v4H7v-2Z" fill="#eee" /></svg>
        <div className="ml-3.5 w-[58px] whitespace-nowrap text-right text-[11.500px] leading-4"><div className="tracking-[-0.35px]">10:24</div><div className="tracking-[-0.35px]">28/11/2023</div></div>
        <div className="ml-2 mr-5 flex size-4 items-center justify-center rounded-full bg-[#4cc2ff] text-[11px] text-[#111]">8</div>
      </div>
    </div>
  );
}

export default function App() {
  return (
    <main className="h-[768px] w-[1366px] overflow-hidden bg-[#3b3b3b]">
      <TitleBar />
      <Toolbar />
      <div className="flex h-[650px]"><Sidebar /><div><Bookmarks /><Page /></div></div>
      <Taskbar />
    </main>
  );
}
